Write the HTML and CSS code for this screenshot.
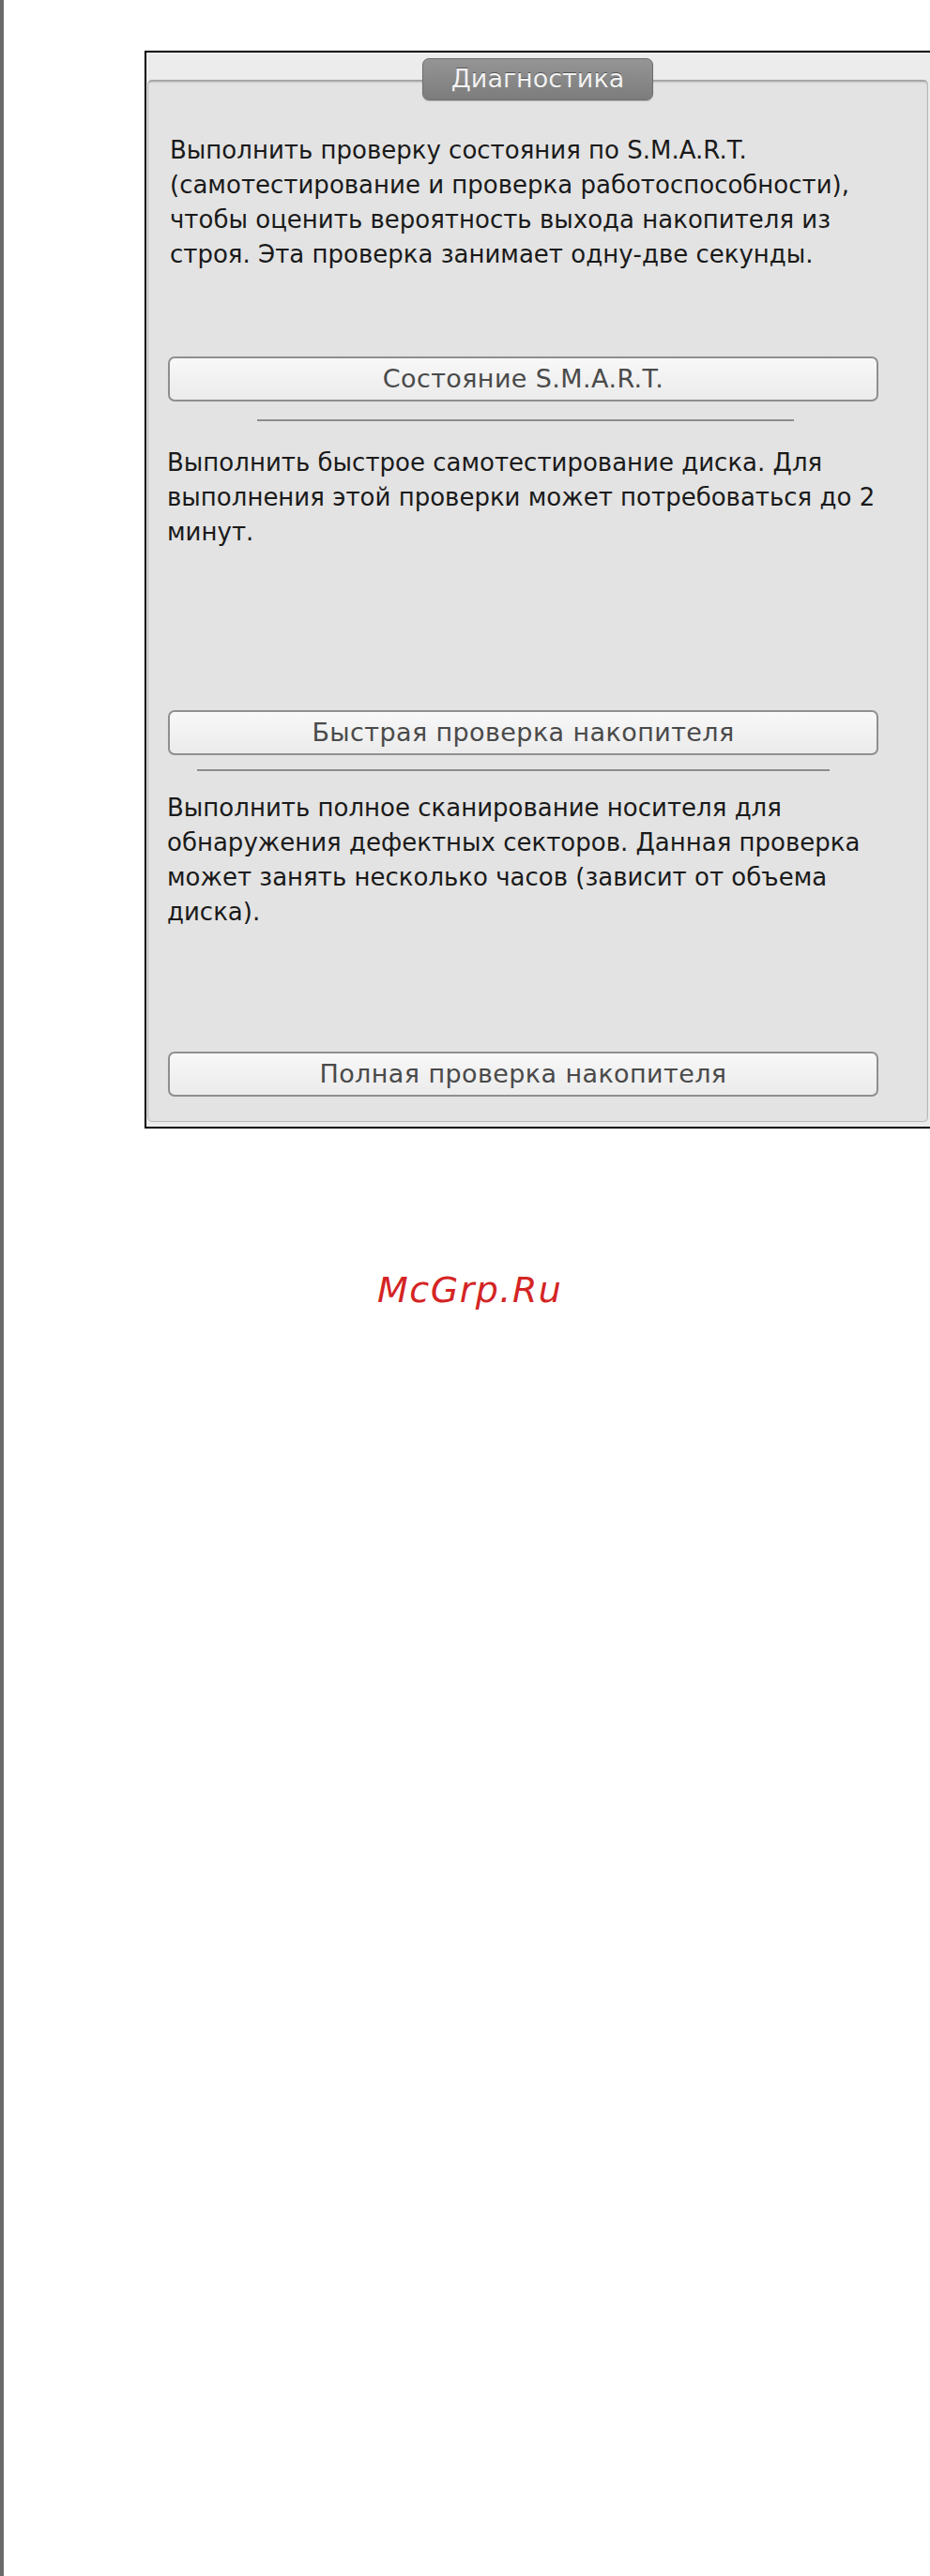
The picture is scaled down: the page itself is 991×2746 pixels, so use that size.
FILE: index.html
```html
<!DOCTYPE html>
<html lang="ru">
<head>
<meta charset="utf-8">
<title>Диагностика</title>
<link rel="stylesheet" href="styles.css">
</head>
<body>
<div class="page">
  <div class="frame">
    <div class="group">
      <div class="tab">Диагностика</div>
      <p class="desc desc-1">Выполнить проверку состояния по S.M.A.R.T.<br>(самотестирование и проверка работоспособности),<br>чтобы оценить вероятность выхода накопителя из<br>строя. Эта проверка занимает одну-две секунды.</p>
      <div class="btn btn-1">Состояние S.M.A.R.T.</div>
      <div class="sep sep-1"></div>
      <p class="desc desc-2">Выполнить быстрое самотестирование диска. Для<br>выполнения этой проверки может потребоваться до 2<br>минут.</p>
      <div class="btn btn-2">Быстрая проверка накопителя</div>
      <div class="sep sep-2"></div>
      <p class="desc desc-3">Выполнить полное сканирование носителя для<br>обнаружения дефектных секторов. Данная проверка<br>может занять несколько часов (зависит от объема<br>диска).</p>
      <div class="btn btn-3">Полная проверка накопителя</div>
    </div>
  </div>
  <div class="watermark">McGrp.Ru</div>
</div>
</body>
</html>
```
FILE: styles.css
```css
html, body {
  margin: 0;
  padding: 0;
  background: #ffffff;
}

.page {
  min-height: 2746px;
  box-sizing: border-box;
  border-left: 4px solid #6a6a6a;
  padding-top: 54px;
  font-family: "DejaVu Sans", "Liberation Sans", sans-serif;
}

.frame {
  margin-left: 150px;
  width: 832px;
  border: 2px solid #000000;
  background: #ececec;
  padding: 29px 5px 5px 1px;
}

.group {
  position: relative;
  display: flex;
  flex-direction: column;
  align-items: flex-start;
  background: #e3e3e3;
  border: 1px solid #b8b8b8;
  border-top: 2px solid #a6a6a6;
  border-radius: 5px;
  box-shadow: inset 0 1px 2px rgba(0, 0, 0, 0.12);
  padding: 0 0 26px 0;
}

.tab {
  position: absolute;
  top: -25px;
  left: 50%;
  transform: translateX(-50%);
  width: 246px;
  height: 45px;
  box-sizing: border-box;
  border: 1px solid #6e6e6e;
  border-radius: 7px;
  background: linear-gradient(#959595, #7c7c7c);
  color: #f2f2f2;
  font-size: 27px;
  line-height: 42px;
  text-align: center;
  text-shadow: 0 -1px 0 #555555;
  box-shadow: 0 1px 1px rgba(0, 0, 0, 0.2);
}

.desc {
  margin: 0;
  color: #1a1a1a;
  font-size: 26px;
  line-height: 37px;
  white-space: nowrap;
}

.desc-1 {
  margin-top: 55px;
  padding-left: 23px;
}

.desc-2 {
  margin-top: 26px;
  padding-left: 20px;
}

.desc-3 {
  margin-top: 21px;
  padding-left: 20px;
}

.btn {
  margin-left: 21px;
  width: 757px;
  height: 48px;
  box-sizing: border-box;
  border: 2px solid #8f8f8f;
  border-radius: 7px;
  background: linear-gradient(#f8f8f8, #ebebeb);
  color: #4a4a4a;
  font-size: 27px;
  letter-spacing: 0.4px;
  line-height: 43px;
  text-align: center;
}

.btn-1 { margin-top: 90px; }
.btn-2 { margin-top: 171px; }
.btn-3 { margin-top: 130px; }

.sep {
  height: 2px;
  background: #8c8c8c;
}

.sep-1 {
  margin-top: 19px;
  margin-left: 116px;
  width: 572px;
}

.sep-2 {
  margin-top: 15px;
  margin-left: 52px;
  width: 674px;
}

.watermark {
  margin-top: 150px;
  padding-left: 398px;
  color: #d42424;
  font-family: "DejaVu Sans", sans-serif;
  font-style: oblique;
  font-size: 38px;
  letter-spacing: 1.5px;
}
```
